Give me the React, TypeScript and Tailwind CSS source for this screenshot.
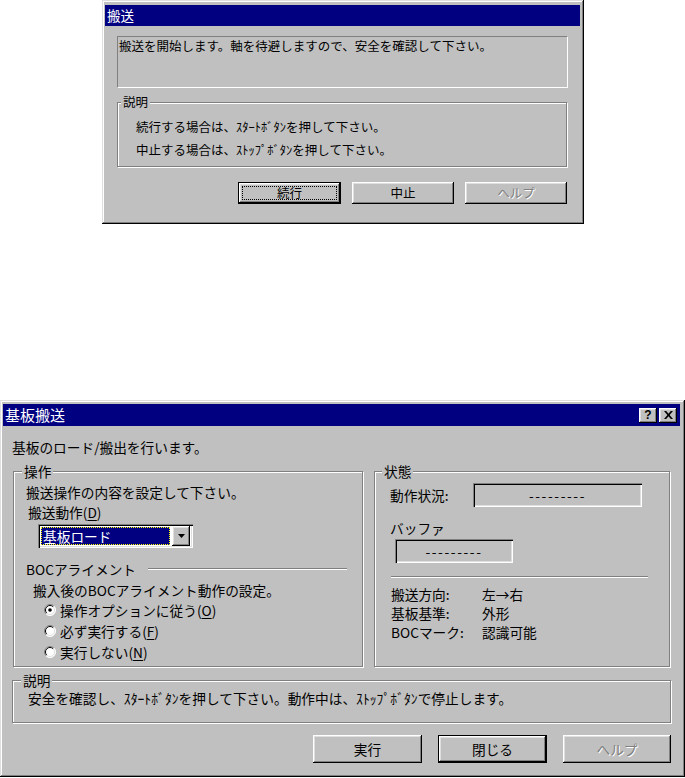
import type { ReactNode } from "react";

const raised =
  "bg-[#c0c0c0] shadow-[inset_-1px_-1px_0_#000,inset_1px_1px_0_#fff,inset_-2px_-2px_0_#808080,inset_2px_2px_0_#dfdfdf]";
const sunken =
  "shadow-[inset_1px_1px_0_#808080,inset_2px_2px_0_#000,inset_-1px_-1px_0_#fff,inset_-2px_-2px_0_#dfdfdf]";
const frame =
  "bg-[#c0c0c0] shadow-[inset_-1px_-1px_0_#000,inset_1px_1px_0_#dfdfdf,inset_-2px_-2px_0_#808080,inset_2px_2px_0_#fff]";

function Group({
  label,
  className,
  labelLeft = "left-[8px]",
  children,
}: {
  label: string;
  className: string;
  labelLeft?: string;
  children: ReactNode;
}) {
  return (
    <div
      className={`relative border border-[#808080] shadow-[1px_1px_0_#fff,inset_1px_1px_0_#fff] ${className}`}
    >
      <span
        className={`absolute -top-[9px] ${labelLeft} bg-[#c0c0c0] px-[2px] leading-[16px]`}
      >
        {label}
      </span>
      {children}
    </div>
  );
}

function Button({
  children,
  className,
  isDefault,
  focused,
  disabled,
}: {
  children: ReactNode;
  className: string;
  isDefault?: boolean;
  focused?: boolean;
  disabled?: boolean;
}) {
  return (
    <div
      className={`flex items-center justify-center ${raised} ${className} ${
        isDefault ? "border border-black" : ""
      }`}
    >
      <span
        className={`${
          disabled ? "text-[#808080] [text-shadow:1px_1px_0_#fff]" : "text-black"
        } ${
          focused
            ? "self-stretch flex-1 m-[3px] flex items-center justify-center border border-dotted border-black"
            : ""
        }`}
      >
        {children}
      </span>
    </div>
  );
}

function Radio({ checked, children }: { checked?: boolean; children: ReactNode }) {
  return (
    <div className="h-[21px] flex items-center gap-[4px]">
      <svg width="12" height="12" viewBox="0 0 12 12">
        <circle cx="6" cy="6" r="5.5" fill="#fff" />
        <path d="M2.1 9.9 A5.5 5.5 0 0 1 9.9 2.1" stroke="#808080" fill="none" />
        <path d="M9.9 2.1 A5.5 5.5 0 0 1 2.1 9.9" stroke="#fff" fill="none" />
        <path d="M2.8 9.2 A4.5 4.5 0 0 1 9.2 2.8" stroke="#000" fill="none" />
        <path d="M9.2 2.8 A4.5 4.5 0 0 1 2.8 9.2" stroke="#dfdfdf" fill="none" />
        {checked && <circle cx="6" cy="6" r="1.8" fill="#000" />}
      </svg>
      <span className="leading-[20px]">{children}</span>
    </div>
  );
}

function Dashes({ className }: { className: string }) {
  return (
    <div className={`flex items-center justify-center bg-[#c0c0c0] ${sunken} ${className}`}>
      <span className="tracking-[1.6px] leading-[18px]">---------</span>
    </div>
  );
}

export default function App() {
  return (
    <div className="w-[685px] h-[778px] bg-white overflow-hidden font-['Noto_Sans_CJK_JP','Noto_Sans',sans-serif] text-black">
      {/* 搬送 message box */}
      <div className={`ml-[102px] w-[482px] h-[224px] pl-[3px] pr-[4px] pt-[5px] text-[12.5px] ${frame}`}>
        <div className="h-[21px] bg-[#000080] pl-[2px] text-white text-[13.5px] leading-[21px]">搬送</div>
        <div className="mt-[10px] ml-[12px] w-[450px] h-[51px] border-t border-l border-[#808080] shadow-[1px_1px_0_#fff] pl-[1px] leading-[17px]">
          搬送を開始します。軸を待避しますので、安全を確認して下さい。
        </div>
        <Group label="説明" labelLeft="left-[3px]" className="mt-[15px] ml-[12px] w-[450px] h-[65px]">
          <div className="pl-[18px] pt-[12px] leading-[23px]">
            <p>続行する場合は、ｽﾀｰﾄﾎﾞﾀﾝを押して下さい。</p>
            <p>中止する場合は、ｽﾄｯﾌﾟﾎﾞﾀﾝを押して下さい。</p>
          </div>
        </Group>
        <div className="mt-[15px] ml-[12px] w-[450px] flex justify-end gap-[11px]">
          <Button className="w-[103px] h-[22px]" isDefault focused>
            続行
          </Button>
          <Button className="w-[102px] h-[22px]">中止</Button>
          <Button className="w-[102px] h-[22px]" disabled>
            ヘルプ
          </Button>
        </div>
      </div>

      {/* 基板搬送 dialog */}
      <div className={`mt-[176px] w-[685px] h-[377px] pl-[3px] pr-[5px] pt-[4px] text-[13.7px] ${frame}`}>
        <div className="h-[22px] bg-[#000080] flex items-center justify-between pl-[2px] pr-[3px]">
          <span className="text-white text-[15px] leading-[22px]">基板搬送</span>
          <div className="flex gap-[2px]">
            <div className={`w-[18px] h-[15px] flex items-center justify-center ${raised}`}>
              <span className="font-['Liberation_Sans',sans-serif] font-bold text-[12px] leading-[12px]">?</span>
            </div>
            <div className={`w-[18px] h-[15px] flex items-center justify-center ${raised}`}>
              <svg width="9" height="8" viewBox="0 0 9 8">
                <path d="M0 0 H2.2 L4.5 2.8 L6.8 0 H9 L5.6 4 L9 8 H6.8 L4.5 5.2 L2.2 8 H0 L3.4 4 Z" fill="#000" />
              </svg>
            </div>
          </div>
        </div>

        <p className="mt-[12px] ml-[9px] leading-[18px]">基板のロード/搬出を行います。</p>

        <div className="mt-[15px] ml-[10px] flex gap-[11px]">
          <Group label="操作" className="w-[350px] h-[196px]">
            <div className="pl-[12px] pt-[10px]">
              <p className="leading-[20px]">搬送操作の内容を設定して下さい。</p>
              <p className="leading-[20px] ml-[2px]">
                搬送動作(<u className="underline-offset-2">D</u>)
              </p>
              <div className={`mt-[2px] ml-[12px] w-[155px] h-[24px] bg-white flex pl-[3px] pr-[3px] py-[2px] ${sunken}`}>
                <div className="flex-1 my-[1px] mr-[2px] bg-[#000080] text-white leading-[16px] pl-[1px] border border-dotted border-[#ffff00]">
                  基板ロード
                </div>
                <div className={`w-[18px] h-[20px] flex items-center justify-center ${raised}`}>
                  <svg width="7" height="4" viewBox="0 0 7 4">
                    <path d="M0 0 H7 L3.5 4 Z" fill="#000" />
                  </svg>
                </div>
              </div>
              <div className="mt-[11px] flex items-center leading-[20px]">
                <span>BOCアライメント</span>
                <span className="flex-1 ml-[12px] mr-[15px] h-[2px] border-t border-[#808080] border-b border-b-white" />
              </div>
              <p className="mt-[2px] ml-[7px] leading-[18px]">搬入後のBOCアライメント動作の設定。</p>
              <div className="ml-[18px]">
                <Radio checked>
                  操作オプションに従う(<u className="underline-offset-2">O</u>)
                </Radio>
                <Radio>
                  必ず実行する(<u className="underline-offset-2">F</u>)
                </Radio>
                <Radio>
                  実行しない(<u className="underline-offset-2">N</u>)
                </Radio>
              </div>
            </div>
          </Group>

          <Group label="状態" labelLeft="left-[7px]" className="w-[296px] h-[196px]">
            <div className="pl-[15px] pt-[11px]">
              <div className="flex items-center">
                <span className="w-[83px] leading-[20px]">動作状況:</span>
                <Dashes className="w-[169px] h-[24px]" />
              </div>
              <p className="mt-[11px] leading-[20px]">バッファ</p>
              <Dashes className="mt-[1px] ml-[5px] w-[118px] h-[24px]" />
              <div className="mt-[13px] ml-[1px] w-[257px] h-[2px] border-t border-[#808080] border-b border-b-white" />
              <div className="mt-[7px] ml-[1px] leading-[19px]">
                <div className="flex">
                  <span className="w-[91px]">搬送方向:</span>
                  <span>左→右</span>
                </div>
                <div className="flex">
                  <span className="w-[91px]">基板基準:</span>
                  <span>外形</span>
                </div>
                <div className="flex">
                  <span className="w-[91px]">BOCマーク:</span>
                  <span>認識可能</span>
                </div>
              </div>
            </div>
          </Group>
        </div>

        <Group label="説明" className="mt-[13px] ml-[9px] w-[659px] h-[43px]">
          <p className="pl-[15px] pt-[7px] leading-[20px]">
            安全を確認し、ｽﾀｰﾄﾎﾞﾀﾝを押して下さい。動作中は、ｽﾄｯﾌﾟﾎﾞﾀﾝで停止します。
          </p>
        </Group>

        <div className="mt-[12px] ml-[9px] w-[659px] flex justify-end gap-[16px]">
          <Button className="w-[109px] h-[28px]">実行</Button>
          <Button className="w-[109px] h-[28px]" isDefault>
            閉じる
          </Button>
          <Button className="w-[108px] h-[28px]" disabled>
            ヘルプ
          </Button>
        </div>
      </div>
    </div>
  );
}
